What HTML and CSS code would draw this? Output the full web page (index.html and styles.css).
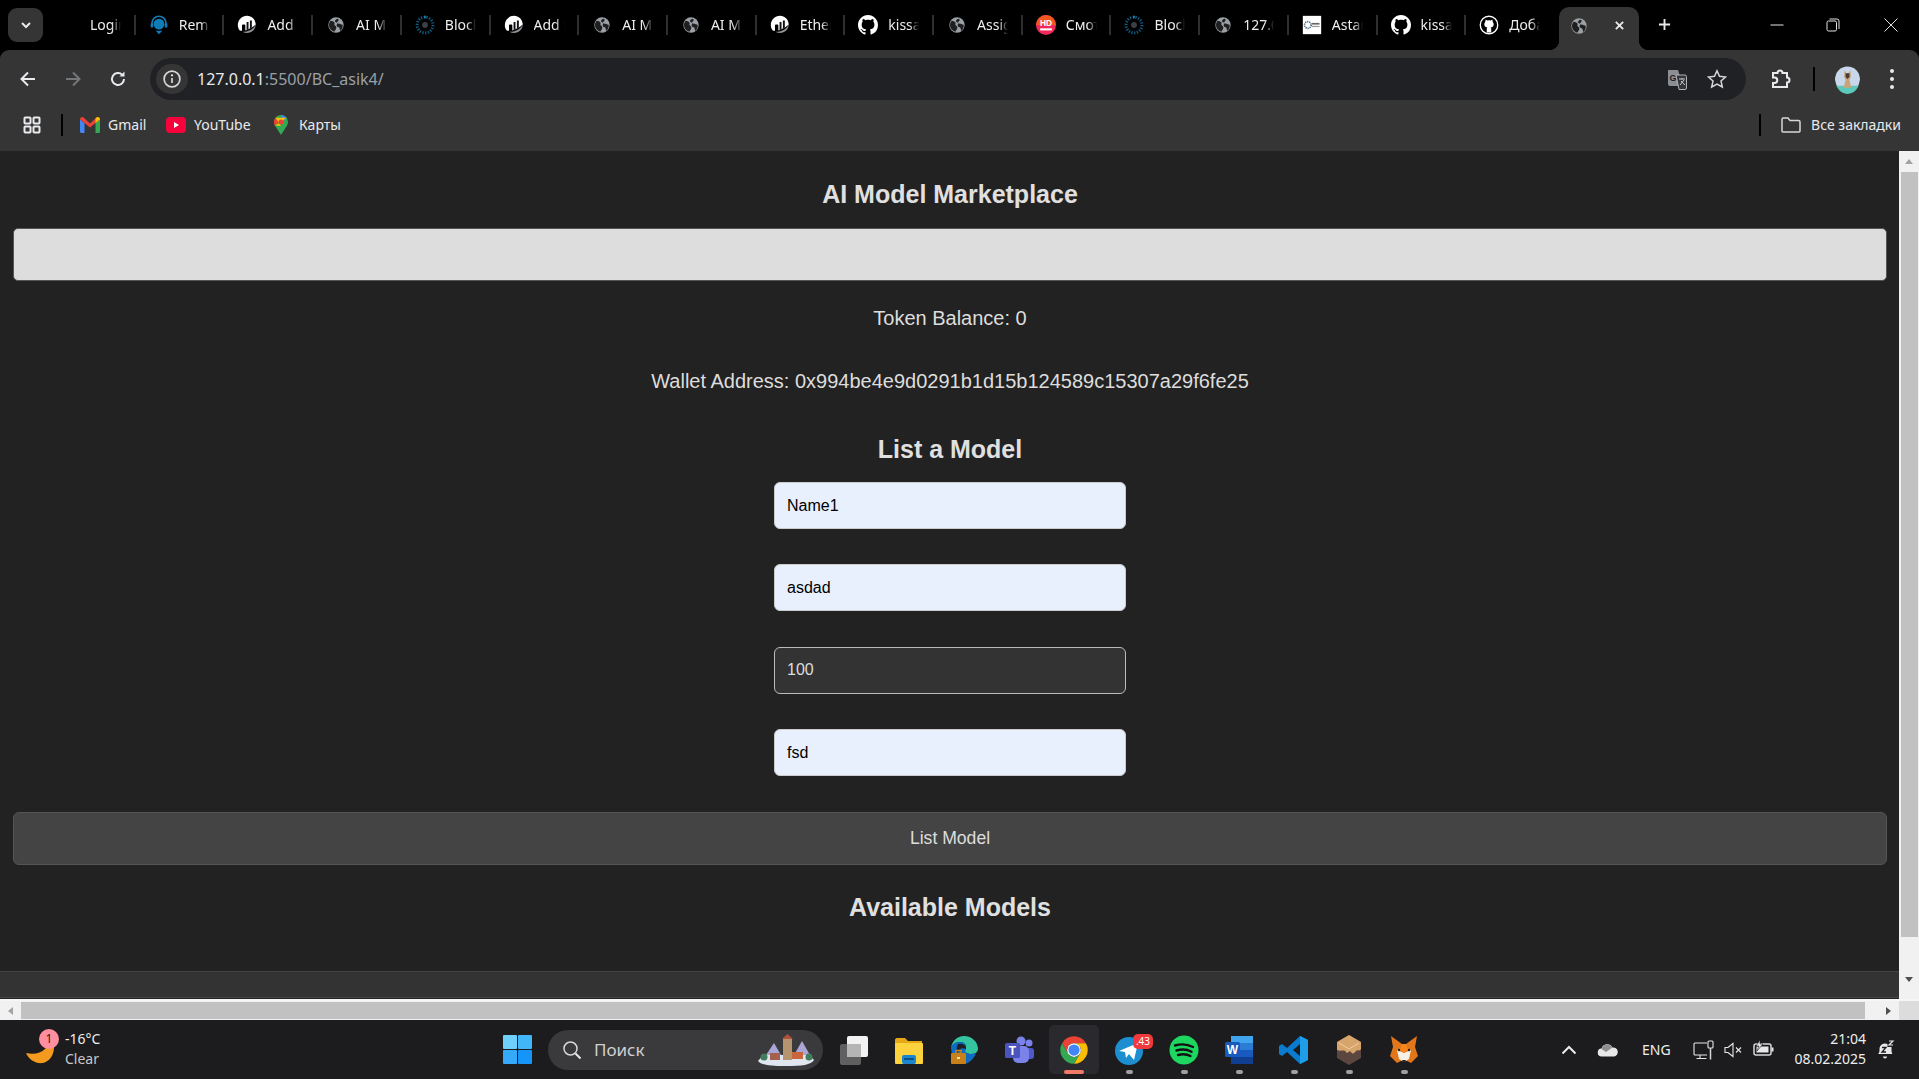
FILE: index.html
```html
<!DOCTYPE html>
<html lang="en">
<head>
<meta charset="utf-8">
<title>AI Model Marketplace</title>
<link rel="stylesheet" href="styles.css">
</head>
<body>
<svg class="defs" aria-hidden="true">
  <symbol id="globe" viewBox="-3 -3 30 30">
    <circle cx="12" cy="12" r="11.500" fill="#9aa0a6"/>
    <path d="M4 5.500c2 1 4.500.5 5.500 2.500s-.5 3 .5 4.500 3 1.500 2.500 4-2 3.500-3 5.500C5 21 1.500 16.500 1.500 12c0-2.500 1-4.800 2.500-6.500zM15 2.500c2 2 .5 3.500-1 4.500s.5 3 2.500 3 3 1 5.500 1.500c.5 3.500-1 7-3.500 9.500-1-1.500-.5-3.500-1.500-5s-3.500-1-4-3 1.500-2 1-3.500-3-1-3.500-3 2-3.500 4.500-4z" fill="#1f1f1f"/>
  </symbol>
  <symbol id="scan" viewBox="0 0 24 24">
    <path d="M22.500 11c0 5.800-4.700 10.500-10.500 10.500-2 0-3.800-.5-5.300-1.500 6.500.5 14-3.500 15.800-9z" fill="#8e9298"/>
    <path d="M12 1C6 1 1 6 1 12c0 2.300.7 4.300 1.800 6 .4.500 1 .8 1.600.8H6V12.500c0-.6.5-1 1-1h2c.6 0 1 .4 1 1v6c4-1 8-3 12.500-7C22.300 5.500 17.700 1 12 1z" fill="#fff"/>
    <path d="M11.500 8.500h2.300v9l-2.300.8zM15.500 6.500h2.300v8.500l-2.300 1.400z" fill="#111"/>
  </symbol>
  <symbol id="spin" viewBox="0 0 24 24">
    <circle cx="12" cy="12" r="9.500" fill="none" stroke="#0e5f86" stroke-width="3.500" stroke-dasharray="1.500 1.800"/>
    <circle cx="12" cy="12" r="3.500" fill="#3a4045"/>
    <path d="M12 1v3" stroke="#1c86b8" stroke-width="2"/>
  </symbol>
  <symbol id="github" viewBox="0 0 16 16">
    <path fill="#fff" d="M8 0C3.580 0 0 3.580 0 8c0 3.540 2.290 6.530 5.470 7.590.4.070.55-.17.55-.38 0-.19-.01-.82-.01-1.490-2.010.37-2.530-.49-2.690-.94-.09-.23-.48-.94-.82-1.130-.28-.15-.68-.52-.01-.53.63-.01 1.080.58 1.230.82.720 1.210 1.870.870 2.330.66.070-.52.280-.87.510-1.070-1.780-.2-3.640-.89-3.640-3.950 0-.87.310-1.590.820-2.150-.08-.2-.36-1.020.08-2.120 0 0 .67-.21 2.200.82.640-.18 1.320-.27 2-.27s1.360.09 2 .27c1.530-1.040 2.200-.82 2.200-.82.440 1.100.160 1.920.080 2.120.51.560.82 1.270.82 2.150 0 3.070-1.870 3.750-3.650 3.950.29.250.54.730.54 1.480 0 1.070-.01 1.930-.01 2.200 0 .21.150.46.550.38A8.010 8.010 0 0 0 16 8c0-4.420-3.580-8-8-8z"/>
  </symbol>
  <symbol id="chrome" viewBox="0 0 48 48">
    <path fill="#ea4335" d="M24 13H43.050A22 22 0 0 0 4.950 13L14.470 29.500A11 11 0 0 1 24 13z"/>
    <path fill="#fbbc04" d="M43.050 13H24A11 11 0 0 1 33.530 29.500L24 46A22 22 0 0 0 43.050 13z"/>
    <path fill="#34a853" d="M4.950 13A22 22 0 0 0 24 46L33.530 29.500A11 11 0 0 1 14.470 29.500z"/>
    <circle cx="24" cy="24" r="11" fill="#fff"/>
    <circle cx="24" cy="24" r="9" fill="#4285f4"/>
  </symbol>
</svg>

<div class="tabstrip">
  <button class="tab-menu" aria-label="Tabs"><svg class="i12" viewBox="0 0 12 12"><path d="M2 4l4 4 4-4" class="st-w2"/></svg></button>
  <div class="tabs">
    <div class="tab"><span class="fav"></span><span class="title">Login</span></div>
    <div class="tab"><span class="fav"><svg viewBox="0 0 24 24"><circle cx="12" cy="11" r="6.500" fill="#0f7cb5"/><path d="M3.500 12V10a8.500 8.500 0 0 1 17 0v2" fill="none" stroke="#0f7cb5" stroke-width="2"/><rect x="2" y="10" width="3" height="5" rx="1" fill="#0f7cb5"/><rect x="19" y="10" width="3" height="5" rx="1" fill="#0f7cb5"/><path d="M8 19h8l-4 4z" fill="#0f7cb5"/></svg></span><span class="title">Remix</span></div>
    <div class="tab"><span class="fav"><svg><use href="#scan"/></svg></span><span class="title">Add Network</span></div>
    <div class="tab"><span class="fav"><svg><use href="#globe"/></svg></span><span class="title">AI Model</span></div>
    <div class="tab"><span class="fav"><svg><use href="#spin"/></svg></span><span class="title">Blockscout</span></div>
    <div class="tab"><span class="fav"><svg><use href="#scan"/></svg></span><span class="title">Add Network</span></div>
    <div class="tab"><span class="fav"><svg><use href="#globe"/></svg></span><span class="title">AI Model</span></div>
    <div class="tab"><span class="fav"><svg><use href="#globe"/></svg></span><span class="title">AI Model</span></div>
    <div class="tab"><span class="fav"><svg><use href="#scan"/></svg></span><span class="title">Ethereum</span></div>
    <div class="tab"><span class="fav"><svg><use href="#github"/></svg></span><span class="title">kissa</span></div>
    <div class="tab"><span class="fav"><svg><use href="#globe"/></svg></span><span class="title">Assignment</span></div>
    <div class="tab"><span class="fav"><svg viewBox="0 0 24 24"><circle cx="12" cy="12" r="12" fill="#f0295b"/><path d="M12 0a12 12 0 0 1 12 12H0A12 12 0 0 1 12 0z" fill="#f2571f"/><text x="12" y="13.500" class="hd">HD</text><rect x="5" y="16" width="14" height="2.500" fill="#fff"/></svg></span><span class="title">Смотреть</span></div>
    <div class="tab"><span class="fav"><svg><use href="#spin"/></svg></span><span class="title">Blockscout</span></div>
    <div class="tab"><span class="fav"><svg><use href="#globe"/></svg></span><span class="title">127.0.0.1</span></div>
    <div class="tab"><span class="fav"><svg viewBox="0 0 24 24"><rect x="1" y="1" width="22" height="22" fill="#fff"/><circle cx="7" cy="12" r="4" fill="none" stroke="#4a6b80" stroke-width="2" stroke-dasharray="1.500 1"/><rect x="12" y="9.500" width="9" height="2" fill="#666"/><rect x="12" y="13" width="9" height="1.500" fill="#999"/></svg></span><span class="title">Astana</span></div>
    <div class="tab"><span class="fav"><svg><use href="#github"/></svg></span><span class="title">kissa</span></div>
    <div class="tab"><span class="fav"><svg viewBox="0 0 24 24"><circle cx="12" cy="12" r="10.500" fill="none" stroke="#fff" stroke-width="1.600"/><path d="M8 5.500l2 1.200a7 7 0 0 1 4 0l2-1.200.5 3c1 1 1.300 2.300 1 3.700-.5 1.800-2 2.600-3.500 2.800.5.500.7 1.200.7 2V21h-5.400v-4c0-.8.200-1.500.7-2-1.500-.2-3-1-3.500-2.800-.3-1.400 0-2.700 1-3.700z" fill="#fff"/></svg></span><span class="title">Добавить</span></div>
  </div>
  <div class="tab-active">
    <svg class="i20"><use href="#globe"/></svg>
    <svg class="i12 close" viewBox="0 0 12 12"><path d="M2 2l8 8M10 2l-8 8" class="st-w2"/></svg>
  </div>
  <svg class="newtab" viewBox="0 0 14 14"><path d="M7 1v12M1 7h12" class="st-w2"/></svg>
  <div class="winctl">
    <span class="ctl"><svg viewBox="0 0 14 14"><path d="M0.500 7h13" class="st-thin"/></svg></span>
    <span class="ctl"><svg viewBox="0 0 14 14"><rect x="1" y="3" width="9.500" height="10" rx="1.500" class="st-thin"/><path d="M3.500 1H11a2 2 0 0 1 2 2v8" class="st-thin"/></svg></span>
    <span class="ctl"><svg viewBox="0 0 14 14"><path d="M.5.500l13 13M13.500.500l-13 13" class="st-thin"/></svg></span>
  </div>
</div>

<div class="toolbar">
  <div class="navrow">
    <span class="navbtn"><svg class="i18" viewBox="0 0 18 18"><path d="M16 9H2.500M9 2.500L2.500 9 9 15.500" class="st-w2"/></svg></span>
    <span class="navbtn"><svg class="i18" viewBox="0 0 18 18"><path d="M2 9h13.500M9 2.500L15.500 9 9 15.500" class="st-dim"/></svg></span>
    <span class="navbtn"><svg class="i18" viewBox="0 0 18 18"><path d="M15 9a6 6 0 1 1-1.800-4.300" class="st-w2"/><path d="M15.500 1.500v5h-5z" fill="#e8eaed"/></svg></span>
    <div class="omnibox">
      <span class="chip"><svg class="i18" viewBox="0 0 16 16"><circle cx="8" cy="8" r="7" class="st-w15"/><path d="M8 7v4.500" class="st-w15"/><circle cx="8" cy="4.700" r="1" fill="#e8eaed"/></svg></span>
      <span class="url"><span class="url-host">127.0.0.1</span>:5500/BC_asik4/</span>
      <span class="omni-btn omni-first"><svg class="i22" viewBox="0 0 22 22"><path d="M2 2h10l5 16H4a2 2 0 0 1-2-2z" fill="#8b8f94"/><text x="7" y="13" class="g">G</text><path d="M10 7h9a1.500 1.500 0 0 1 1.500 1.500V20a1.500 1.500 0 0 1-1.500 1.500h-6z" fill="#35363a" stroke="#b0b3b8"/><path d="M13 11h6M16 10v1.500M14 17l4-5M15 13l4 4" stroke="#c4c7c5" fill="none"/></svg></span>
      <span class="omni-btn"><svg class="i20" viewBox="0 0 20 20"><path d="M10 1.800l2.500 5.500 6 .7-4.500 4 1.300 6L10 15l-5.300 3 1.300-6-4.500-4 6-.7z" class="st-w15"/></svg></span>
    </div>
    <span class="tool-ext"><svg class="i22" viewBox="0 0 22 22"><path d="M3 5h4.500a2.500 2.500 0 0 1 5 0H17v4.500a2.500 2.500 0 0 1 0 5V19H3v-4h1.500a2.500 2.500 0 0 0 0-5.500H3z" class="st-w2"/></svg></span>
    <span class="tool-sep"></span>
    <span class="tool-avatar"><svg class="i26" viewBox="0 0 26 26"><circle cx="13" cy="13" r="13" fill="#c8d8ea"/><path d="M0 20h26a13 13 0 0 1-26 0z" fill="#5cc9bd"/><path d="M10 4l2 3h2l2-3 .5 7-1.500 3 2 8H9l2-8-1.500-3z" fill="#c9a37a"/><path d="M11 7h4v4l-2 2-2-2z" fill="#4a3a30"/></svg></span>
    <span class="tool-dots"><i></i><i></i><i></i></span>
  </div>
  <div class="bookmarks">
    <svg class="i18" viewBox="0 0 18 18"><rect x="1.500" y="1.500" width="6" height="6" rx=".8" class="st-w2"/><rect x="10.500" y="1.500" width="6" height="6" rx=".8" class="st-w2"/><rect x="1.500" y="10.500" width="6" height="6" rx=".8" class="st-w2"/><rect x="10.500" y="10.500" width="6" height="6" rx=".8" class="st-w2"/></svg>
    <span class="bm-sep"></span>
    <span class="bm bm-gmail"><svg class="i19" viewBox="0 0 20 16"><path d="M0 2.500v12c0 .8.600 1.500 1.500 1.500H4.500V6z" fill="#4285f4"/><path d="M20 2.500v12c0 .8-.600 1.500-1.500 1.500H15.500V6z" fill="#34a853"/><path d="M0 2.500C0 .6 2-.6 3.500.5L10 6.500 16.500.5C18-.6 20 .6 20 2.500L15.500 6 10 10.500 4.500 6z" fill="#ea4335"/><path d="M15.500 1.500l1-1C18-.6 20 .6 20 2.500L15.500 6z" fill="#fbbc04"/></svg><span>Gmail</span></span>
    <span class="bm bm-yt"><svg class="i19" viewBox="0 0 20 16"><rect y="0" width="20" height="16" rx="4" fill="#f5033a"/><path d="M8 5l5 3-5 3z" fill="#fff"/></svg><span>YouTube</span></span>
    <span class="bm bm-maps"><svg class="i-pin" viewBox="0 0 14 20"><path d="M7 0a7 7 0 0 1 6.100 10.400L7 20 .9 10.400A7 7 0 0 1 7 0z" fill="#34a853"/><path d="M7 0a7 7 0 0 1 5.500 2.700L8 8z" fill="#4285f4"/><path d="M1.500 2.700A7 7 0 0 0 .9 10.400L5 7z" fill="#ea4335"/><path d="M1.500 2.700L12.500 2.700 7 7 .9 10.400 7 11z" fill="#fbbc04"/><circle cx="7" cy="7" r="2.500" fill="#ea4335"/></svg><span>Карты</span></span>
    <span class="bm-sep bm-sep-right"></span>
    <span class="bm-all"><svg class="i-folder" viewBox="0 0 20 16"><path d="M1 14V2.500C1 1.700 1.600 1 2.400 1H7l2 2.500h8.500c.8 0 1.500.7 1.500 1.500v9c0 .6-.5 1-1 1H2a1 1 0 0 1-1-1z" class="st-w15"/></svg><span>Все закладки</span></span>
  </div>
</div>

<div class="viewport">
  <main class="page">
    <h1 class="heading">AI Model Marketplace</h1>
    <div class="status-bar"></div>
    <p class="balance">Token Balance: 0</p>
    <p class="wallet">Wallet Address: 0x994be4e9d0291b1d15b124589c15307a29f6fe25</p>
    <h2 class="sub sub-list">List a Model</h2>
    <form class="form">
      <input class="field field-auto" value="Name1" aria-label="Name">
      <input class="field field-auto" value="asdad" aria-label="Description">
      <input class="field" value="100" aria-label="Price">
      <input class="field field-auto" value="fsd" aria-label="File">
    </form>
    <button class="list-btn" type="button">List Model</button>
    <h2 class="sub sub-avail">Available Models</h2>
    <div class="page-foot"></div>
  </main>
  <div class="vscroll">
    <span class="arrow arrow-up"></span>
    <span class="vthumb"></span>
    <span class="arrow arrow-down"></span>
  </div>
</div>
<div class="hscroll">
  <span class="arrow arrow-left"></span>
  <span class="hthumb"></span>
  <span class="arrow arrow-right"></span>
  <span class="corner"></span>
</div>

<footer class="taskbar">
  <div class="weather">
    <svg class="moon" viewBox="0 0 28 24"><path d="M0 13c8 2 15 0 19-4 2-2 3-4 4-7l5 1c1 10-3 18-11 20-7 1-14-3-17-10z" fill="#f39a1f"/></svg>
    <span class="badge">1</span>
    <span class="w-text"><span class="w-temp">-16°C</span><span class="w-cond">Clear</span></span>
  </div>
  <svg class="winlogo" viewBox="0 0 29 29"><rect width="14" height="14" rx="1" fill="#6fd0fb"/><rect x="15" width="14" height="14" rx="1" fill="#41b6f8"/><rect y="15" width="14" height="14" rx="1" fill="#35aafa"/><rect x="15" y="15" width="14" height="14" rx="1" fill="#1595f7"/></svg>
  <div class="search">
    <svg class="i20" viewBox="0 0 20 20"><circle cx="8.500" cy="8.500" r="6.500" class="st-w15"/><path d="M13.500 13.500l5 5" class="st-w2"/></svg>
    <span class="s-text">Поиск</span>
    <svg class="castle" viewBox="0 0 60 34"><path d="M2 28c8-10 16-6 26-6s22-4 30 5c-3 5-12 6-28 6S5 32 2 28z" fill="#dfe6f0"/><path d="M10 22l8-12 7 12zM38 22l8-14 8 14z" fill="#a9a5d4"/><rect x="27" y="5" width="9" height="22" fill="#b5946f"/><path d="M26 6l5.500-5 5.500 5z" fill="#b0523a"/><rect x="36" y="19" width="11" height="7" fill="#c9663f"/><rect x="14" y="20" width="10" height="7" fill="#a4604a"/><circle cx="8" cy="24" r="3.500" fill="#3f7d5c"/><circle cx="53" cy="24" r="3.500" fill="#3f7d5c"/></svg>
  </div>
  <div class="apps">
    <div class="app"><svg class="app-ic" viewBox="0 0 30 30"><rect x="1" y="9" width="21" height="21" rx="2" fill="#5f5f5f"/><rect x="8" y="1" width="21" height="21" rx="2" fill="#f2f2f2"/><rect x="8" y="9" width="14" height="13" fill="#b5b5b5"/></svg></div>
    <div class="app"><svg class="app-ic" viewBox="0 0 30 30"><path d="M1 5c0-1 .8-2 2-2h8l3 3h14v22H1z" fill="#e6a817"/><rect x="1" y="8" width="28" height="21" rx="1" fill="#fdd33d"/><rect x="8" y="20" width="14" height="9" rx="2" fill="#1a86d0"/><rect x="10" y="23" width="10" height="2" fill="#0c4f85"/></svg></div>
    <div class="app"><svg class="app-ic" viewBox="0 0 30 30"><path d="M15 1c8 0 14 6 14 13 0 3-3 5-7 5-3 0-6-1-6-3 0-1 1-2 1-4 0-3-3-5-6-5C7 7 3 10 2 13 3 6 8 1 15 1z" fill="#35c4a0"/><path d="M2 13c0-3 4-6 9-6 4 0 6 2 6 5 0 1-1 3-1 4 0 2 3 3 6 3l5-1c-2 6-7 11-13 11-6 0-11-5-12-16z" fill="#0c6cc4"/><path d="M9 9c5-1 9 2 8 5-5-2-8 1-9 6 0-4-1-8 1-11z" fill="#1f2024"/><rect x="2" y="18" width="15" height="11" rx="1" fill="#c8801a"/><rect x="7" y="15.500" width="5" height="3" fill="none" stroke="#c8801a" stroke-width="1.500"/><rect x="8" y="22" width="3" height="2" fill="#ffe2a0"/></svg></div>
    <div class="app"><svg class="app-ic" viewBox="0 0 30 30"><circle cx="25" cy="8" r="3.500" fill="#7b83eb"/><circle cx="17" cy="6" r="4.500" fill="#7b83eb"/><rect x="21" y="13" width="9" height="11" rx="3" fill="#5059c9"/><rect x="9" y="11" width="16" height="17" rx="5" fill="#7b83eb"/><rect x="1" y="8" width="15" height="15" rx="1.500" fill="#4b53bc"/><text x="8.500" y="20" class="tm">T</text></svg></div>
    <div class="app app-on"><svg class="app-ic"><use href="#chrome"/></svg><span class="pip pip-on"></span></div>
    <div class="app"><span class="tg"><svg class="app-ic" viewBox="0 0 30 30"><circle cx="14" cy="16" r="14" fill="#1d8fd1"/><path d="M4 16l19-8-4 17-5-6-3 4-1-6z" fill="#fff"/></svg><span class="tg-badge">.43</span></span><span class="pip"></span></div>
    <div class="app"><svg class="app-ic" viewBox="0 0 30 30"><circle cx="15" cy="15" r="14.500" fill="#1ed760"/><path d="M6 10.500c6-1.800 13-1.200 18 1.500M7.500 15.500c5-1.400 11-1 15 1.300M9 20c4-1 9-.8 12.500 1" fill="none" stroke="#111" stroke-width="2.400" stroke-linecap="round"/></svg><span class="pip"></span></div>
    <div class="app"><svg class="app-ic" viewBox="0 0 30 30"><rect x="7" y="1" width="22" height="28" rx="2" fill="#2b7cd3"/><rect x="7" y="1" width="22" height="7" fill="#41a5ee"/><rect x="7" y="15" width="22" height="7" fill="#185abd"/><rect x="7" y="22" width="22" height="7" fill="#103f91"/><rect x="1" y="7" width="15" height="15" rx="1.500" fill="#185abd"/><text x="8.500" y="19" class="tm">W</text></svg><span class="pip"></span></div>
    <div class="app"><svg class="app-ic" viewBox="0 0 30 30"><path d="M21 1l8 4v20l-8 4L8 17l-5 4-3-2v-8l3-2 5 4zM21 9l-7 6 7 6z" fill="#0a7ccf"/><path d="M21 1l8 4v20l-8 4z" fill="#1e9ee8"/></svg><span class="pip"></span></div>
    <div class="app"><svg class="app-ic" viewBox="0 0 30 30"><path d="M15 0l12 7v16l-12 7-12-7V7z" fill="#5b4640"/><path d="M15 0l12 7v7c-2 3-3 0-5 2s-3 4-5 1-3 3-5 0-5 0-9-2V7z" fill="#d7a46c"/><path d="M5 8l10 6 10-6" fill="none" stroke="#f0cda0"/></svg><span class="pip"></span></div>
    <div class="app"><svg class="app-ic" viewBox="0 0 30 30"><path d="M2 1l11 8h4l11-8-2 11 3 9-7 7-4-2h-6l-4 2-7-7 3-9z" fill="#e2761b"/><path d="M8 15l7 3 7-3-2 9-5 3-5-3z" fill="#f6f0e6"/><path d="M13 9h4l2 6-4 3-4-3z" fill="#f6851b"/><path d="M13 25h4l-2 3z" fill="#222"/><circle cx="10" cy="15" r="1.200" fill="#222"/><circle cx="20" cy="15" r="1.200" fill="#222"/></svg><span class="pip"></span></div>
  </div>
  <div class="tray">
    <svg class="t-chev" viewBox="0 0 16 10"><path d="M1.500 8.500L8 2l6.500 6.500" class="st-w2"/></svg>
    <svg class="t-cloud" viewBox="0 0 22 14"><path d="M5 13.500a4 4 0 0 1-.5-8A6 6 0 0 1 15.500 4.500a4.500 4.500 0 0 1 1.500 9z" fill="#e8e8e8"/><path d="M4.500 6a6 6 0 0 1 11-1.500L9 9z" fill="#8f8f8f"/></svg>
    <span class="t-lang">ENG</span>
    <svg class="t-net" viewBox="0 0 21 20"><path d="M14 3H2a1 1 0 0 0-1 1v10a1 1 0 0 0 1 1h12" class="st-w1"/><path d="M7 15v3M3.500 18.500h10" class="st-w1"/><rect x="15" y="1" width="5" height="7" rx="1" class="st-w1"/><path d="M17.500 8v11.500" class="st-w15"/></svg>
    <svg class="t-vol" viewBox="0 0 19 16"><path d="M1 5.500h3L9 1.500v13L4 10.500H1z" class="st-w1"/><path d="M12 5.500l5 5M17 5.500l-5 5" class="st-w1"/></svg>
    <svg class="t-bat" viewBox="0 0 21 16"><rect x="1" y="4" width="17" height="11" rx="2" class="st-w15"/><rect x="3.500" y="6.500" width="12" height="6" fill="#e8e8e8"/><rect x="18.500" y="7.500" width="2" height="4" fill="#e8e8e8"/><path d="M7 0L3 6h3l-2 5 6-7H7z" fill="#e8e8e8" stroke="#1c1c1f" stroke-width=".6"/></svg>
    <div class="clock"><span>21:04</span><span>08.02.2025</span></div>
    <svg class="t-bell" viewBox="0 0 20 20"><path d="M3 14c1.500-1 1.500-3 1.500-5a5.500 5.500 0 0 1 8-5V7h4V9c0 2 0 4 1 5z" fill="#e8e8e8"/><path d="M8 16.500h4a2 2 0 0 1-4 0z" fill="#e8e8e8"/><path d="M7 7.500h4l-4 4.500h4" fill="none" stroke="#1c1c1f" stroke-width="1.300"/><path d="M14 1h4l-4 4h4" fill="none" stroke="#e8e8e8" stroke-width="1.200"/></svg>
  </div>
</footer>
</body>
</html>
```

FILE: styles.css
```css
* { box-sizing: border-box; }
html, body { margin: 0; height: 100%; overflow: hidden; }
body {
  background: #000;
  color: #e8eaed;
  font-family: "Noto Sans", "Open Sans", sans-serif;
  display: flex;
  flex-direction: column;
  height: 1079px;
}
.defs { width: 0; height: 0; position: absolute; }
svg { display: block; flex: none; }

.st-w2 { fill: none; stroke: #e8eaed; stroke-width: 2; }
.st-dim { fill: none; stroke: #74777a; stroke-width: 2; }
.st-w15 { fill: none; stroke: #d5d7da; stroke-width: 1.5; }
.st-w1 { fill: none; stroke: #e8e8e8; stroke-width: 1.100; }
.st-thin { fill: none; stroke: #e4e4e4; stroke-width: 1; }

.i12 { width: 12px; height: 12px; }
.i18 { width: 18px; height: 18px; }
.i19 { width: 20px; height: 16px; }
.i20 { width: 20px; height: 20px; }
.i22 { width: 22px; height: 22px; }
.i26 { width: 25px; height: 30px; border-radius: 50%; }

.hd { font: 700 10px "Liberation Sans", sans-serif; fill: #fff; text-anchor: middle; }
.g { font: 700 9px "Liberation Sans", sans-serif; fill: #222; text-anchor: middle; }
.tm { font: 700 12px "Liberation Sans", sans-serif; fill: #fff; text-anchor: middle; }

/* tab strip */
.tabstrip { height: 50px; flex: none; display: flex; align-items: flex-start; background: #000; }
.tab-menu {
  width: 35px; height: 34px; margin: 8px 4px 0 8px; padding: 0;
  background: #353535; border: 0; border-radius: 9px;
  display: flex; align-items: center; justify-content: center;
}
.tabs { display: flex; height: 50px; width: 1508px; }
.tab {
  width: 88.750px; height: 20px; margin-top: 15px;
  padding-left: 13px; display: flex; align-items: center;
  border-right: 2px solid #2f2f2f;
}
.tab:last-child { border-right: 0; }
.fav { width: 20px; height: 24px; flex: none; display: flex; align-items: center; }
.fav svg { width: 20px; height: 24px; }
.title {
  margin-left: 10px; width: 31px; overflow: hidden; white-space: nowrap;
  font-size: 14px; color: #eee; line-height: 20px;
  -webkit-mask-image: linear-gradient(90deg, #000 70%, transparent 100%);
  mask-image: linear-gradient(90deg, #000 70%, transparent 100%);
}
.tab-active {
  width: 80px; height: 43px; margin: 7px 0 0 4px;
  background: #353535; border-radius: 10px 10px 0 0;
  display: flex; align-items: center; padding: 0 14px 6px 10px;
  justify-content: space-between; position: relative;
}
.tab-active::before, .tab-active::after {
  content: ""; position: absolute; bottom: 0; width: 10px; height: 10px;
}
.tab-active::before { left: -10px; background: radial-gradient(circle at 0 0, #000 10px, #353535 10.500px); }
.tab-active::after { right: -10px; background: radial-gradient(circle at 100% 0, #000 10px, #353535 10.500px); }
.tab-active .close { width: 11px; height: 11px; }
.newtab { width: 13px; height: 13px; margin: 18px 0 0 19px; }
.winctl { margin-left: auto; display: flex; }
.ctl { width: 56px; height: 50px; display: flex; align-items: center; justify-content: center; }
.ctl:nth-child(2) { margin-right: 2px; }
.ctl svg { width: 14px; height: 14px; }

/* toolbar */
.toolbar { height: 101px; flex: none; background: #353535; border-radius: 9px 9px 0 0; }
.navrow { height: 50px; padding: 8px 4px 0 5px; display: flex; align-items: center; }
.navbtn { width: 45px; height: 42px; display: flex; align-items: center; justify-content: center; }
.omnibox {
  width: 1596px; height: 42px; margin-left: 10px;
  background: #202124; border-radius: 21px;
  display: flex; align-items: center; padding: 0 9px 0 6px;
}
.chip {
  width: 32px; height: 30px; border-radius: 15px; background: #353535;
  display: flex; align-items: center; justify-content: center;
}
.url { margin-left: 9px; font-size: 16px; color: #9aa0a6; white-space: nowrap; }
.url-host { color: #e8eaed; }
.omni-btn { width: 40px; display: flex; justify-content: center; }
.omni-first { margin-left: auto; }
.tool-ext { width: 44px; margin-left: 13px; display: flex; justify-content: center; }
.tool-sep { width: 2px; height: 24px; margin-left: 10px; background: #000; }
.tool-avatar { width: 44px; margin-left: 10px; display: flex; justify-content: center; }
.tool-dots { width: 46px; display: flex; flex-direction: column; align-items: center; gap: 4px; }
.tool-dots i { width: 4px; height: 4px; border-radius: 50%; background: #e8eaed; }

.bookmarks { height: 51px; padding: 0 18px 2px 23px; display: flex; align-items: center; font-size: 14px; color: #e8eaed; }
.bm-sep { width: 2px; height: 22px; margin: 0 17px 0 20px; background: #000; }
.bm { display: flex; align-items: center; gap: 8px; }
.bm-gmail { width: 86px; }
.bm-yt { width: 108px; }
.bm-maps { gap: 11px; }
.i-pin { width: 14px; height: 20px; }
.i-folder { width: 20px; height: 16px; }
.bm-sep-right { margin: 0 20px 0 auto; }
.bm-all { display: flex; align-items: center; gap: 10px; }

/* page */
.viewport { height: 848px; flex: none; display: flex; background: #222; }
.page {
  flex: 1; min-width: 0; padding: 29px 12px 0 13px;
  display: flex; flex-direction: column; align-items: stretch;
  background: #222; color: #ddd;
  font-family: "Liberation Sans", Arial, sans-serif; text-align: center;
}
.heading { margin: 0; font-size: 25px; line-height: 28px; font-weight: 700; color: #e0e0e0; }
.status-bar { height: 53px; margin-top: 20px; background: #ddd; border: 1px solid #555; border-radius: 5px; flex: none; }
.balance, .wallet { margin: 0; font-size: 20px; line-height: 23px; color: #ddd; }
.balance { margin-top: 26px; }
.wallet { margin-top: 40px; }
.sub { margin: 0; font-size: 25px; line-height: 28px; font-weight: 700; color: #e0e0e0; }
.sub-list { margin-top: 42px; }
.form { margin-top: 19px; display: flex; flex-direction: column; align-items: center; gap: 35.400px; }
.field {
  width: 352px; height: 47px; padding: 0 12px; display: block;
  background: #333; border: 1px solid #bbb; border-radius: 6px;
  color: #ddd; font: 16px "Liberation Sans", Arial, sans-serif;
}
.field-auto { background: #e8f0fe; color: #000; border-color: #ccc; }
.list-btn {
  height: 53px; margin-top: 36px; flex: none;
  background: #444; border: 1px solid #555; border-radius: 6px;
  color: #ddd; font: 17.600px "Liberation Sans", Arial, sans-serif;
}
.sub-avail { margin-top: 28px; }
.page-foot {
  margin: auto -12px 1px -13px; height: 27px;
  background: #333; border-top: 1px solid #444; border-bottom: 1px solid #444;
}

/* scrollbars */
.vscroll { width: 20px; flex: none; background: #f1f1f1; display: flex; flex-direction: column; align-items: center; }
.vthumb { width: 17px; height: 765px; background: #c1c1c1; margin-top: 8px; }
.arrow { width: 0; height: 0; border-style: solid; flex: none; }
.arrow-up { margin-top: 8px; border-width: 0 4.500px 5px; border-color: transparent transparent #a3a3a3; }
.arrow-down { margin-top: 40px; border-width: 5px 4.500px 0; border-color: #505050 transparent transparent; }
.hscroll { height: 21px; flex: none; background: #f1f1f1; border-top: 2px solid #f6f6f6; display: flex; align-items: center; }
.arrow-left { margin-left: 8px; border-width: 4.500px 5px 4.500px 0; border-color: transparent #a3a3a3 transparent transparent; }
.hthumb { width: 1844px; height: 17px; margin-left: 8px; background: #c1c1c1; }
.arrow-right { margin-left: 21px; border-width: 4.500px 0 4.500px 5px; border-color: transparent transparent transparent #505050; }
.corner { margin-left: 8px; width: 20px; height: 19px; background: #dcdcdc; }

/* taskbar */
.taskbar { height: 59px; flex: none; background: #1c1c1f; display: flex; align-items: center; padding-left: 26px; }
.weather { width: 477px; display: flex; align-items: center; position: relative; flex: none; }
.moon { width: 28px; height: 24px; margin-top: 4px; }
.badge {
  position: absolute; left: 13px; top: -2px; width: 20px; height: 20px;
  border-radius: 50%; background: #ff8e9e; color: #222;
  font-size: 12px; line-height: 20px; text-align: center;
}
.w-text { margin-left: 11px; margin-top: -2px; display: flex; flex-direction: column; font-size: 14px; line-height: 20px; }
.w-temp { color: #eee; }
.w-cond { color: #c8c8c8; }
.winlogo { width: 29px; height: 29px; }
.search {
  width: 275px; height: 40px; margin-left: 16px; border-radius: 20px;
  background: #3a3a3d; display: flex; align-items: center; padding: 0 7px 0 14px;
}
.s-text { margin-left: 12px; font-size: 17px; color: #d0d0d0; }
.castle { width: 60px; height: 34px; margin-left: auto; }
.apps { margin-left: 3.500px; display: flex; }
.app {
  width: 55px; height: 49px; padding-top: 10px;
  display: flex; flex-direction: column; align-items: center;
}
.app-ic { width: 30px; height: 30px; }
.app-on { position: relative; }
.app-on::before {
  content: ""; position: absolute; z-index: 0; inset: 0 2.500px;
  background: #2a2a2e; border-radius: 5px;
}
.app-on > * { position: relative; z-index: 1; }
.pip { width: 7px; height: 4px; margin-top: 5px; border-radius: 2px; background: #a0a0a0; }
.pip-on { width: 20px; background: #f07a65; }
.tg { position: relative; display: block; height: 30px; margin-left: 2px; }
.tg-badge {
  position: absolute; right: -8px; top: -1px; width: 20px; height: 15px;
  border-radius: 5px; background: #f0393b; color: #fff;
  font-size: 10px; line-height: 15px; text-align: center;
}
.tray { margin-left: auto; padding-right: 24px; display: flex; align-items: center; font-size: 14px; color: #eee; }
.t-chev { width: 16px; height: 10px; }
.t-cloud { width: 22px; height: 14px; margin-left: 20.500px; }
.t-lang { width: 30px; margin-left: 23px; white-space: nowrap; }
.t-net { width: 21px; height: 20px; margin-left: 21px; }
.t-vol { width: 19px; height: 16px; margin-left: 10px; }
.t-bat { width: 21px; height: 16px; margin-left: 10px; margin-top: -3px; }
.clock { width: 92px; display: flex; flex-direction: column; align-items: flex-end; line-height: 20px; margin-top: -2px; }
.t-bell { width: 20px; height: 20px; margin-left: 9px; }
```
